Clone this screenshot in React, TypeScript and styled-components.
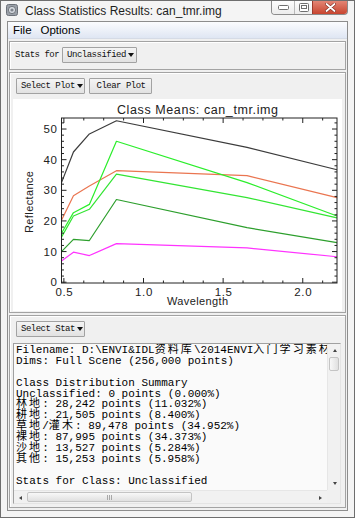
import React from 'react'
import styled, { createGlobalStyle, css } from 'styled-components'

const GlobalStyle = createGlobalStyle`
  html, body {
    margin: 0;
    padding: 0;
    background: #ffffff;
  }
  * {
    box-sizing: border-box;
  }
`

const monoFont = `'Liberation Mono', 'Courier New', monospace`
const cjkFont = `'Liberation Mono', 'Noto Sans CJK SC', monospace`

const Window = styled.div`
  width: 355px;
  height: 518px;
  border: 1px solid #6e6e6e;
  background: #f4f4f4;
  display: flex;
  flex-direction: column;
  font-family: 'Liberation Sans', Arial, sans-serif;
  overflow: hidden;
`

const TitleBar = styled.div`
  height: 20px;
  flex-shrink: 0;
  display: flex;
  align-items: flex-start;
  padding-left: 5px;
`

const TitleIcon = styled.svg`
  width: 12px;
  height: 12px;
  margin-top: 3px;
  flex-shrink: 0;
`

const TitleText = styled.span`
  margin-left: 7px;
  margin-top: 3px;
  font-size: 12px;
  color: #1e1e1e;
  white-space: nowrap;
`

const Controls = styled.div`
  display: flex;
  margin-left: auto;
  margin-right: 6px;
  margin-top: -1px;
  height: 15px;
  border: 1px solid #8c8c8c;
  border-top: none;
  border-radius: 0 0 4px 4px;
  overflow: hidden;
`

const CtrlButton = styled.div<{ $w: number; $close?: boolean }>`
  width: ${p => p.$w}px;
  height: 100%;
  display: flex;
  align-items: center;
  justify-content: center;
  background: linear-gradient(#ffffff, #ececec);
  border-left: 1px solid #b9b9b9;
  &:first-child {
    border-left: none;
  }
  ${p =>
    p.$close &&
    css`
      background: linear-gradient(#e58a7a, #c8452f);
      border-left: 1px solid #9d3a2b;
    `}
`

const Client = styled.div`
  flex: 1;
  margin: 0 6px 6px 6px;
  border: 1px solid #8d8d8d;
  background: #f0f0f0;
  display: flex;
  flex-direction: column;
  min-height: 0;
`

const MenuBar = styled.div`
  height: 17px;
  flex-shrink: 0;
  display: flex;
  align-items: center;
  gap: 9px;
  padding-left: 5px;
  background: linear-gradient(#fbfcfe, #dfe6f3);
  border-bottom: 1px solid #d5dbe6;
  font-size: 11.5px;
  color: #000;
`

const Panels = styled.div`
  flex: 1;
  display: flex;
  flex-direction: column;
  gap: 2px;
  padding: 2px 1px 2px 1px;
  min-height: 0;
`

const Panel = styled.div<{ $h?: number }>`
  border: 1px solid #a3a3a3;
  box-shadow: inset 1px 1px 0 #ffffff;
  background: #f0f0f0;
  display: flex;
  flex-direction: column;
  ${p => (p.$h ? `height: ${p.$h}px; flex-shrink: 0;` : 'flex: 1; min-height: 0;')}
`

const StatsRow = styled.div`
  display: flex;
  align-items: center;
  gap: 3px;
  padding: 5px 0 0 5px;
`

const SmallLabel = styled.span`
  font-family: ${monoFont};
  font-size: 9px;
  letter-spacing: -0.5px;
  color: #111;
`

const Button = styled.div<{ $w: number }>`
  width: ${p => p.$w}px;
  height: 16px;
  display: flex;
  align-items: center;
  justify-content: space-between;
  padding: 0 3px 0 4px;
  border: 1px solid #a2a2a2;
  border-radius: 1px;
  background: linear-gradient(#f4f4f4, #e2e2e2);
  font-family: ${monoFont};
  font-size: 9px;
  letter-spacing: -0.5px;
  color: #111;
  white-space: nowrap;
`

const CenteredButton = styled(Button)`
  justify-content: center;
`

const DropArrow = styled.span`
  width: 0;
  height: 0;
  border-left: 3.5px solid transparent;
  border-right: 3.5px solid transparent;
  border-top: 4px solid #111;
  margin-left: 2px;
`

const ButtonRow = styled.div`
  display: flex;
  gap: 4px;
  padding: 5px 0 0 6px;
`

const PlotArea = styled.div`
  margin: 5px 3px 0 3px;
  width: 329px;
  height: 212px;
  background: #ffffff;
`

const TextBox = styled.div`
  margin: 6px 4px 0 3px;
  height: 161px;
  border: 1px solid #a0a0a0;
  border-right-color: #e4e4e4;
  border-bottom-color: #e4e4e4;
  display: grid;
  grid-template-columns: 1fr 13px;
  grid-template-rows: 1fr 13px;
  background: #fafafa;
`

const TextContent = styled.div`
  overflow: hidden;
  padding: 1px 0 0 2px;
  font-family: ${monoFont};
  font-size: 11px;
  line-height: 10.9px;
  color: #000;
`

const TextLine = styled.div`
  white-space: pre;
  height: 10.9px;
`

const Cjk = styled.span`
  font-family: ${cjkFont};
  font-size: 11px;
  letter-spacing: 2.1px;
  line-height: 10.9px;
`

const ScrollTrack = styled.div<{ $dir: 'v' | 'h' }>`
  display: flex;
  flex-direction: ${p => (p.$dir === 'v' ? 'column' : 'row')};
  background: #f1f1f1;
  border-${p => (p.$dir === 'v' ? 'left' : 'top')}: 1px solid #e6e6e6;
`

const ScrollArrow = styled.div`
  width: 13px;
  height: 13px;
  flex-shrink: 0;
  display: flex;
  align-items: center;
  justify-content: center;
`

const Tri = styled.span<{ $dir: 'up' | 'down' | 'left' | 'right' }>`
  width: 0;
  height: 0;
  ${p =>
    p.$dir === 'up'
      ? css`
          border-left: 2.5px solid transparent;
          border-right: 2.5px solid transparent;
          border-bottom: 3px solid #444;
        `
      : p.$dir === 'down'
      ? css`
          border-left: 2.5px solid transparent;
          border-right: 2.5px solid transparent;
          border-top: 3px solid #444;
        `
      : p.$dir === 'left'
      ? css`
          border-top: 2.5px solid transparent;
          border-bottom: 2.5px solid transparent;
          border-right: 3px solid #444;
        `
      : css`
          border-top: 2.5px solid transparent;
          border-bottom: 2.5px solid transparent;
          border-left: 3px solid #444;
        `}
`

const Thumb = styled.div<{ $dir: 'v' | 'h'; $len: number }>`
  ${p =>
    p.$dir === 'v'
      ? css`
          height: ${p.$len}px;
          margin: 0 1px;
          background: linear-gradient(90deg, #f8f8f8, #e0e0e0);
        `
      : css`
          width: ${p.$len}px;
          margin: 1px 0;
          background: linear-gradient(#f8f8f8, #e0e0e0);
        `}
  border: 1px solid #c4c4c4;
  border-radius: 2px;
  display: flex;
  align-items: center;
  justify-content: center;
  flex-shrink: 0;
`

const Grip = styled.span`
  width: 5px;
  height: 5px;
  background: repeating-linear-gradient(90deg, #a8a8a8 0 1px, transparent 1px 2px);
`

const Spacer = styled.div`
  flex: 1;
`

const Corner = styled.div`
  background: #f0f0f0;
`

// chart geometry, in px inside the white plot area
const px0 = 48.5
const px1 = 324
const py0 = 19
const py1 = 184
const wMin = 0.485
const wMax = 2.215
const vMax = 53.6

const X = (w: number) => px0 + ((w - wMin) / (wMax - wMin)) * (px1 - px0)
const Y = (v: number) => py1 - 0.8 - (v / vMax) * (py1 - py0 - 0.8)

const bands = [0.485, 0.56, 0.66, 0.83, 1.65, 2.215]

const series = [
  { color: '#3c3c3c', values: [32.5, 42.5, 48.4, 52.7, 44, 36.7] },
  { color: '#ea7550', values: [20.2, 28.2, 31.4, 36.4, 34.8, 27.6] },
  { color: '#2bee2b', values: [16, 22.7, 25.4, 46, 32.5, 21.6] },
  { color: '#33e533', values: [14.7, 21.6, 23.8, 35.3, 27.6, 21] },
  { color: '#2d9f2d', values: [10, 14, 13.6, 27, 17.8, 12.9] },
  { color: '#ff33ff', values: [6.9, 9.8, 8.7, 12.6, 11.2, 8.3] }
]

const ChartText = styled.text`
  font-family: 'Liberation Sans', Arial, sans-serif;
  fill: #222;
`

const Chart: React.FC = () => {
  const yMajor = [0, 10, 20, 30, 40, 50]
  const yMinor: number[] = []
  for (let v = 0; v <= vMax; v += 2) if (v % 10 !== 0) yMinor.push(v)
  const xMajor = [0.5, 1.0, 1.5, 2.0]
  const xMinor: number[] = []
  for (let w = 0.5; w <= wMax; w += 0.125) if (Math.abs(w * 2 - Math.round(w * 2)) > 0.01) xMinor.push(w)

  return (
    <svg width={329} height={212} viewBox="0 0 329 212">
      <ChartText x={184.5} y={15} fontSize={12.5} textAnchor="middle" textLength={161}>
        Class Means: can_tmr.img
      </ChartText>
      {series.map((s, i) => (
        <polyline
          key={i}
          points={s.values.map((v, j) => `${X(bands[j])},${Y(v)}`).join(' ')}
          fill="none"
          stroke={s.color}
          strokeWidth={1.2}
          strokeLinejoin="round"
        />
      ))}
      <rect x={px0} y={py0} width={px1 - px0} height={py1 - py0} fill="none" stroke="#222" strokeWidth={1} />
      {yMajor.map(v => (
        <g key={'ym' + v}>
          <line x1={px0} x2={px0 + 5} y1={Y(v)} y2={Y(v)} stroke="#222" />
          <line x1={px1} x2={px1 - 5} y1={Y(v)} y2={Y(v)} stroke="#222" />
          <ChartText x={44.5} y={Y(v) + 4} fontSize={11.5} textAnchor="end" letterSpacing={0.6}>
            {v}
          </ChartText>
        </g>
      ))}
      {yMinor.map(v => (
        <g key={'yn' + v}>
          <line x1={px0} x2={px0 + 2.5} y1={Y(v)} y2={Y(v)} stroke="#222" />
          <line x1={px1} x2={px1 - 2.5} y1={Y(v)} y2={Y(v)} stroke="#222" />
        </g>
      ))}
      {xMajor.map(w => (
        <g key={'xm' + w}>
          <line x1={X(w)} x2={X(w)} y1={py1} y2={py1 - 5} stroke="#222" />
          <line x1={X(w)} x2={X(w)} y1={py0} y2={py0 + 5} stroke="#222" />
          <ChartText x={X(w) + 0.5} y={197} fontSize={11.5} textAnchor="middle" letterSpacing={0.6}>
            {w.toFixed(1)}
          </ChartText>
        </g>
      ))}
      {xMinor.map(w => (
        <g key={'xn' + w}>
          <line x1={X(w)} x2={X(w)} y1={py1} y2={py1 - 2.5} stroke="#222" />
          <line x1={X(w)} x2={X(w)} y1={py0} y2={py0 + 2.5} stroke="#222" />
        </g>
      ))}
      <ChartText x={184.5} y={206} fontSize={11} textAnchor="middle" textLength={61}>
        Wavelength
      </ChartText>
      <ChartText
        x={0}
        y={0}
        fontSize={11}
        textAnchor="middle"
        textLength={62}
        transform="translate(19.5 103) rotate(-90)"
      >
        Reflectance
      </ChartText>
    </svg>
  )
}

const lines = [
  'Filename: D:\\ENVI&IDL资料库\\2014ENVI入门学习素材\\第5章\\can_tmr.img',
  'Dims: Full Scene (256,000 points)',
  '',
  'Class Distribution Summary',
  'Unclassified: 0 points (0.000%)',
  '林地: 28,242 points (11.032%)',
  '耕地: 21,505 points (8.400%)',
  '草地/灌木: 89,478 points (34.952%)',
  '裸地: 87,995 points (34.373%)',
  '沙地: 13,527 points (5.284%)',
  '其他: 15,253 points (5.958%)',
  '',
  'Stats for Class: Unclassified'
]

const renderLine = (text: string) =>
  text.split(/([\u4e00-\u9fff]+)/).map((part, i) =>
    /[\u4e00-\u9fff]/.test(part) ? <Cjk key={i}>{part}</Cjk> : <React.Fragment key={i}>{part}</React.Fragment>
  )

export default function App() {
  return (
    <>
      <GlobalStyle />
      <Window>
        <TitleBar>
          <TitleIcon viewBox="0 0 12 12">
            <rect x="0.5" y="0.5" width="11" height="11" rx="2" fill="#9aa0a8" stroke="#6c7179" />
            <circle cx="6" cy="6" r="3.6" fill="#d8dce2" stroke="#5f646b" strokeWidth="0.8" />
            <circle cx="6" cy="6" r="1.6" fill="#7d838b" />
          </TitleIcon>
          <TitleText>Class Statistics Results: can_tmr.img</TitleText>
          <Controls>
            <CtrlButton $w={22}>
              <svg width="11" height="5" viewBox="0 0 11 5">
                <rect x="0.5" y="0.5" width="10" height="4" rx="1" fill="#fff" stroke="#6f6f6f" />
              </svg>
            </CtrlButton>
            <CtrlButton $w={18}>
              <svg width="10" height="9" viewBox="0 0 10 9">
                <rect x="0.5" y="0.5" width="9" height="8" rx="1" fill="#fff" stroke="#6f6f6f" />
                <rect x="2.5" y="2.5" width="5" height="3" fill="#fff" stroke="#6f6f6f" />
              </svg>
            </CtrlButton>
            <CtrlButton $w={35} $close>
              <svg width="11" height="9" viewBox="0 0 11 9">
                <path d="M1.5 1 L9.5 8 M9.5 1 L1.5 8" stroke="#7a2a1f" strokeWidth="3" strokeLinecap="round" />
                <path d="M1.5 1 L9.5 8 M9.5 1 L1.5 8" stroke="#ffffff" strokeWidth="1.8" strokeLinecap="round" />
              </svg>
            </CtrlButton>
          </Controls>
        </TitleBar>
        <Client>
          <MenuBar>
            <span>File</span>
            <span>Options</span>
          </MenuBar>
          <Panels>
            <Panel $h={29}>
              <StatsRow>
                <SmallLabel>Stats for</SmallLabel>
                <Button $w={75}>
                  Unclassified
                  <DropArrow />
                </Button>
              </StatsRow>
            </Panel>
            <Panel $h={241}>
              <ButtonRow>
                <Button $w={69}>
                  Select Plot
                  <DropArrow />
                </Button>
                <CenteredButton $w={63}>Clear Plot</CenteredButton>
              </ButtonRow>
              <PlotArea>
                <Chart />
              </PlotArea>
            </Panel>
            <Panel>
              <ButtonRow>
                <Button $w={69}>
                  Select Stat
                  <DropArrow />
                </Button>
              </ButtonRow>
              <TextBox>
                <TextContent>
                  {lines.map((l, i) => (
                    <TextLine key={i}>{renderLine(l)}</TextLine>
                  ))}
                </TextContent>
                <ScrollTrack $dir="v">
                  <ScrollArrow>
                    <Tri $dir="up" />
                  </ScrollArrow>
                  <Thumb $dir="v" $len={14} />
                  <Spacer />
                  <ScrollArrow>
                    <Tri $dir="down" />
                  </ScrollArrow>
                </ScrollTrack>
                <ScrollTrack $dir="h">
                  <ScrollArrow>
                    <Tri $dir="left" />
                  </ScrollArrow>
                  <Thumb $dir="h" $len={165}>
                    <Grip />
                  </Thumb>
                  <Spacer />
                  <ScrollArrow>
                    <Tri $dir="right" />
                  </ScrollArrow>
                </ScrollTrack>
                <Corner />
              </TextBox>
            </Panel>
          </Panels>
        </Client>
      </Window>
    </>
  )
}
